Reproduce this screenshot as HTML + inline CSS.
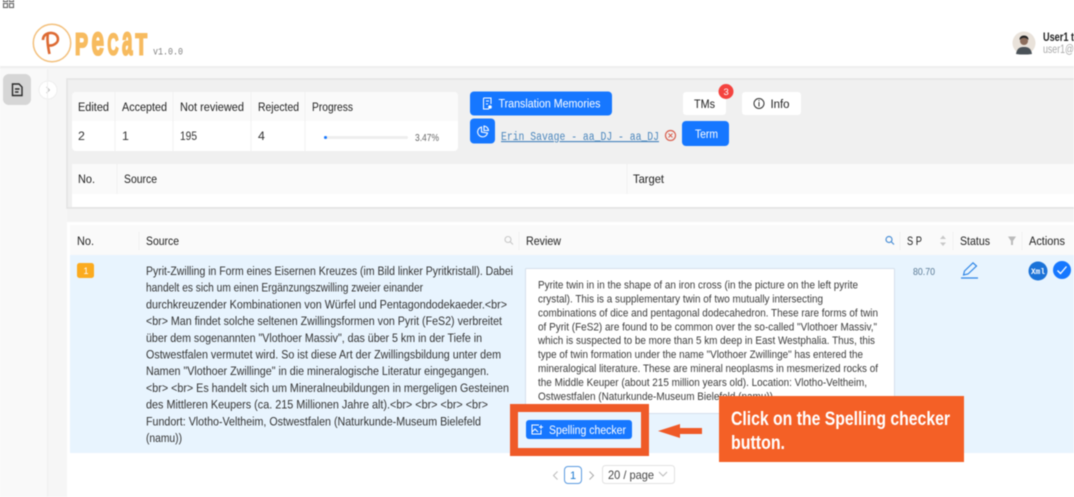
<!DOCTYPE html>
<html><head><meta charset="utf-8"><title>PeCat</title>
<style>
html,body{margin:0;padding:0;width:1074px;height:497px;overflow:hidden;background:#fff}
svg{display:block;filter:blur(.45px)}
text{font-family:"Liberation Sans",sans-serif;fill:#333;font-size:12px}
.s{font-size:12.4px;fill:#333}
.r{font-size:10.8px;fill:#3c3c3c}
.h{font-size:12.2px;fill:#222}
.l{fill:#f7bb5f;stroke:#f7bb5f;stroke-width:2.1px;font-weight:700}
</style></head><body>
<svg width="1074" height="497" viewBox="0 0 1074 497" xmlns="http://www.w3.org/2000/svg">
<rect width="1074" height="497" fill="#fff"/>
<!-- page regions -->
<rect y="67" width="1074" height="430" fill="#f6f6f6"/>
<rect y="69" width="47" height="428" fill="#f9f9f9"/>
<rect x="67" y="208" width="1007" height="289" fill="#fff"/>
<rect x="67" y="208" width="1007" height="14" fill="#f3f3f3"/>
<rect y="66" width="1074" height="2" fill="#efefef"/>
<!-- top left icon -->
<g fill="none" stroke="#666" stroke-width="1.100"><rect x="3.500" y="-2.500" width="4" height="4"/><rect x="9.500" y="-2.500" width="4" height="4"/><rect x="3.500" y="3.500" width="4" height="4"/><rect x="9.500" y="3.500" width="4" height="4"/></g>
<!-- logo -->
<circle cx="52" cy="43" r="18.700" fill="none" stroke="#f3c07c" stroke-width="1.500"/>
<path d="M49.500 54 C47.500 45 47 38 48 33 M43 40 C43 34.500 48 32.500 52 33 C58.500 34 60 41 55 44 C53 45.500 51 45.800 48.500 45.500" fill="none" stroke="#dd6a33" stroke-width="2.600"/>
<text class="l" x="75" y="54.500" textLength="13" lengthAdjust="spacingAndGlyphs" style="font-size:31px">P</text>
<text class="l" x="91.500" y="54.500" textLength="12.500" lengthAdjust="spacingAndGlyphs" style="font-size:41px">e</text>
<text class="l" x="107.500" y="54.500" textLength="11" lengthAdjust="spacingAndGlyphs" style="font-size:30px">C</text>
<text class="l" x="122" y="54.500" textLength="10.500" lengthAdjust="spacingAndGlyphs" style="font-size:41px">a</text>
<text class="l" x="135.500" y="54.500" textLength="11.500" lengthAdjust="spacingAndGlyphs" style="font-size:30px">T</text>
<text x="153" y="54.500" textLength="30" lengthAdjust="spacingAndGlyphs" style="font-family:'Liberation Mono',monospace;font-size:10px;fill:#808080">v1.0.0</text>
<!-- user -->
<circle cx="1024" cy="43" r="11.500" fill="#e9e2da"/>
<path d="M1016 54 C1017 48 1020 47 1024 47 C1028 47 1031 48 1032 54 L1028 54.500 L1020 54.500Z" fill="#4a5258"/>
<circle cx="1024" cy="41" r="4" fill="#8b6d5c"/>
<path d="M1019.500 40 C1019 34 1029 34 1028.500 40 C1026 37 1022 37 1019.500 40Z" fill="#222"/>
<text x="1043" y="41" textLength="31" lengthAdjust="spacingAndGlyphs" style="font-size:11.500px;font-weight:700;fill:#222">User1 t</text>
<text x="1043" y="53" textLength="31" lengthAdjust="spacingAndGlyphs" style="font-size:11.500px;fill:#aaa">user1@</text>
<!-- sidebar -->
<rect x="3" y="74" width="28" height="31" rx="6" fill="#d6d6d6"/>
<path d="M12.500 84 L19 84 L22 87 L22 95.500 L12.500 95.500Z M15 89 L19.500 89 M15 92 L18.500 92" fill="none" stroke="#2a2a2a" stroke-width="1.400"/>
<circle cx="48" cy="90" r="9" fill="#fff" stroke="#eee"/>
<path d="M46.500 87 L49.500 90 L46.500 93" fill="none" stroke="#bbb"/>
<line x1="47.500" y1="69" x2="47.500" y2="497" stroke="#f0f0f0"/>
<!-- top panel -->
<rect x="67" y="79" width="1008" height="129" fill="#f0f0f0" stroke="#e3e3e3" stroke-width="1.500"/>
<!-- stats table -->
<rect x="72" y="92" width="386" height="59" rx="4" fill="#fff"/>
<path d="M72 121V96a4 4 0 0 1 4-4H454a4 4 0 0 1 4 4V121Z" fill="#fafafa"/>
<g stroke="#f2f2f2"><line x1="115" y1="92" x2="115" y2="151"/><line x1="173" y1="92" x2="173" y2="151"/><line x1="251" y1="92" x2="251" y2="151"/><line x1="305" y1="92" x2="305" y2="151"/></g>
<text class="h" x="78" y="111" textLength="31" lengthAdjust="spacingAndGlyphs">Edited</text>
<text class="h" x="122" y="111" textLength="45" lengthAdjust="spacingAndGlyphs">Accepted</text>
<text class="h" x="180" y="111" textLength="64" lengthAdjust="spacingAndGlyphs">Not reviewed</text>
<text class="h" x="258" y="111" textLength="41" lengthAdjust="spacingAndGlyphs">Rejected</text>
<text class="h" x="312" y="111" textLength="41" lengthAdjust="spacingAndGlyphs">Progress</text>
<text class="s" x="78" y="140">2</text><text class="s" x="122" y="140">1</text><text class="s" x="180" y="140" textLength="17" lengthAdjust="spacingAndGlyphs">195</text><text class="s" x="258" y="140">4</text>
<rect x="324" y="136" width="84" height="3" rx="1.500" fill="#eee"/>
<rect x="324" y="136" width="3" height="3" rx="1.500" fill="#1677ff"/>
<text x="415" y="141" textLength="24" lengthAdjust="spacingAndGlyphs" style="font-size:10.500px;fill:#666">3.47%</text>
<!-- second table -->
<rect x="72" y="164" width="1002" height="43" fill="#fff"/>
<rect x="72" y="164" width="1002" height="30" fill="#fafafa"/>
<g stroke="#f0f0f0"><line x1="117" y1="164" x2="117" y2="194"/><line x1="627" y1="164" x2="627" y2="194"/></g>
<text class="h" x="78" y="183" textLength="17" lengthAdjust="spacingAndGlyphs">No.</text>
<text class="h" x="124" y="183" textLength="33" lengthAdjust="spacingAndGlyphs">Source</text>
<text class="h" x="633" y="183" textLength="31" lengthAdjust="spacingAndGlyphs">Target</text>
<!-- buttons -->
<rect x="470" y="91.500" width="142" height="24" rx="4" fill="#1677ff"/>
<path d="M483.500 98 H491 V104 M483.500 98 V109 H489 M486 101 H489 M486 104 H488" fill="none" stroke="#fff" stroke-width="1"/>
<circle cx="490" cy="107" r="1.800" fill="#fff"/>
<text x="498.500" y="107.500" textLength="102" lengthAdjust="spacingAndGlyphs" style="fill:#fff;font-size:12.400px">Translation Memories</text>
<rect x="470" y="118.500" width="25" height="25" rx="4" fill="#1677ff"/>
<path d="M481.500 127 A5 5 0 1 0 487.500 133 L481.500 132 Z M484 126 A5 5 0 0 1 488.500 130.500 L484 130.500 Z" fill="none" stroke="#fff" stroke-width="1.100"/>
<text x="501" y="140" textLength="158" lengthAdjust="spacingAndGlyphs" text-decoration="underline" style="font-family:'Liberation Mono',monospace;font-size:11.500px;fill:#4a86bd">Erin Savage - aa_DJ - aa_DJ</text>
<circle cx="670.500" cy="135.500" r="5" fill="none" stroke="#d9604f" stroke-width="1.200"/>
<path d="M668.500 133.500 L672.500 137.500 M672.500 133.500 L668.500 137.500" stroke="#d9604f" stroke-width="1"/>
<rect x="682" y="121" width="47" height="25" rx="4" fill="#1677ff"/>
<text x="695" y="138" textLength="23" lengthAdjust="spacingAndGlyphs" style="fill:#fff;font-size:12.400px">Term</text>
<rect x="683" y="92" width="43" height="23" rx="3" fill="#fff"/>
<text class="h" x="694" y="108" textLength="21" lengthAdjust="spacingAndGlyphs">TMs</text>
<circle cx="726" cy="91.500" r="7.500" fill="#f4433f"/>
<text x="723.500" y="95" style="font-size:9.500px;fill:#fff">3</text>
<rect x="742" y="92" width="59" height="23" rx="3" fill="#fff"/>
<circle cx="759" cy="103.500" r="5" fill="none" stroke="#333" stroke-width="1"/>
<path d="M759 102 V106.500 M759 100 V101" stroke="#333"/>
<text class="h" x="770.500" y="108" textLength="19" lengthAdjust="spacingAndGlyphs">Info</text>
<!-- main table head -->
<rect x="70" y="225" width="1004" height="30" fill="#fafafa"/>
<g stroke="#f0f0f0"><line x1="139" y1="232" x2="139" y2="250"/><line x1="519" y1="232" x2="519" y2="250"/><line x1="900" y1="232" x2="900" y2="250"/><line x1="953" y1="232" x2="953" y2="250"/><line x1="1022" y1="232" x2="1022" y2="250"/></g>
<text class="h" x="77" y="245" textLength="17" lengthAdjust="spacingAndGlyphs">No.</text>
<text class="h" x="146" y="245" textLength="33" lengthAdjust="spacingAndGlyphs">Source</text>
<circle cx="508" cy="239.500" r="3" fill="none" stroke="#c8c8c8" stroke-width="1.100"/><line x1="510" y1="241.500" x2="513" y2="244.500" stroke="#c8c8c8" stroke-width="1.100"/>
<text class="h" x="526" y="245" textLength="35" lengthAdjust="spacingAndGlyphs">Review</text>
<circle cx="889" cy="239.500" r="3" fill="none" stroke="#4b8fd6" stroke-width="1.200"/><line x1="891" y1="241.500" x2="894" y2="244.500" stroke="#4b8fd6" stroke-width="1.200"/>
<text class="h" x="907" y="245" textLength="15" lengthAdjust="spacingAndGlyphs">S P</text>
<path d="M943 235.500 L946 239 H940Z M943 246 L946 242.500 H940Z" fill="#c8c8c8"/>
<text class="h" x="960" y="245" textLength="30" lengthAdjust="spacingAndGlyphs">Status</text>
<path d="M1008 236.500 H1016 L1013 241 V245 H1011 V241Z" fill="#bbb"/>
<text class="h" x="1029" y="245" textLength="36" lengthAdjust="spacingAndGlyphs">Actions</text>
<!-- row -->
<rect x="70" y="255" width="1004" height="198" fill="#e8f4fe"/>
<rect x="77" y="263" width="17" height="15" rx="2.500" fill="#fbab1f"/>
<text x="83.500" y="274" style="font-size:9px;fill:#fff">1</text>
<text class="s" x="146" y="275" textLength="367" lengthAdjust="spacingAndGlyphs">Pyrit-Zwilling in Form eines Eisernen Kreuzes (im Bild linker Pyritkristall). Dabei</text>
<text class="s" x="146" y="291.700" textLength="277" lengthAdjust="spacingAndGlyphs">handelt es sich um einen Ergänzungszwilling zweier einander</text>
<text class="s" x="146" y="308.400" textLength="361" lengthAdjust="spacingAndGlyphs">durchkreuzender Kombinationen von Würfel und Pentagondodekaeder.&lt;br&gt;</text>
<text class="s" x="146" y="325.100" textLength="356" lengthAdjust="spacingAndGlyphs">&lt;br&gt; Man findet solche seltenen Zwillingsformen von Pyrit (FeS2) verbreitet</text>
<text class="s" x="146" y="341.800" textLength="336" lengthAdjust="spacingAndGlyphs">über dem sogenannten "Vlothoer Massiv", das über 5 km in der Tiefe in</text>
<text class="s" x="146" y="358.500" textLength="355" lengthAdjust="spacingAndGlyphs">Ostwestfalen vermutet wird. So ist diese Art der Zwillingsbildung unter dem</text>
<text class="s" x="146" y="375.200" textLength="343" lengthAdjust="spacingAndGlyphs">Namen "Vlothoer Zwillinge" in die mineralogische Literatur eingegangen.</text>
<text class="s" x="146" y="391.900" textLength="363" lengthAdjust="spacingAndGlyphs">&lt;br&gt; &lt;br&gt; Es handelt sich um Mineralneubildungen in mergeligen Gesteinen</text>
<text class="s" x="146" y="408.600" textLength="342" lengthAdjust="spacingAndGlyphs">des Mittleren Keupers (ca. 215 Millionen Jahre alt).&lt;br&gt; &lt;br&gt; &lt;br&gt; &lt;br&gt;</text>
<text class="s" x="146" y="425.300" textLength="335" lengthAdjust="spacingAndGlyphs">Fundort: Vlotho-Veltheim, Ostwestfalen (Naturkunde-Museum Bielefeld</text>
<text class="s" x="146" y="442" textLength="36" lengthAdjust="spacingAndGlyphs">(namu))</text>
<!-- review box -->
<rect x="525.500" y="268.500" width="369" height="145" rx="1" fill="#fff" stroke="#d5e0ec"/>
<text class="r" x="538" y="288.500" textLength="320" lengthAdjust="spacingAndGlyphs">Pyrite twin in in the shape of an iron cross (in the picture on the left pyrite</text>
<text class="r" x="538" y="302.500" textLength="285" lengthAdjust="spacingAndGlyphs">crystal). This is a supplementary twin of two mutually intersecting</text>
<text class="r" x="538" y="316.400" textLength="340" lengthAdjust="spacingAndGlyphs">combinations of dice and pentagonal dodecahedron. These rare forms of twin</text>
<text class="r" x="538" y="330.300" textLength="339" lengthAdjust="spacingAndGlyphs">of Pyrit (FeS2) are found to be common over the so-called "Vlothoer Massiv,"</text>
<text class="r" x="538" y="344.200" textLength="337" lengthAdjust="spacingAndGlyphs">which is suspected to be more than 5 km deep in East Westphalia. Thus, this</text>
<text class="r" x="538" y="358.100" textLength="325" lengthAdjust="spacingAndGlyphs">type of twin formation under the name "Vlothoer Zwillinge" has entered the</text>
<text class="r" x="538" y="372" textLength="340" lengthAdjust="spacingAndGlyphs">mineralogical literature. These are mineral neoplasms in mesmerized rocks of</text>
<text class="r" x="538" y="385.900" textLength="329" lengthAdjust="spacingAndGlyphs">the Middle Keuper (about 215 million years old). Location: Vlotho-Veltheim,</text>
<text class="r" x="538" y="399.800" textLength="235" lengthAdjust="spacingAndGlyphs">Ostwestfalen (Naturkunde-Museum Bielefeld (namu))</text>
<!-- sp/status/actions -->
<text x="913" y="275" textLength="22" lengthAdjust="spacingAndGlyphs" style="font-size:10.500px;fill:#5a7a96">80.70</text>
<path d="M963.500 275 L964.500 271 L973 262.800 L976.500 266 L968 274 Z" fill="none" stroke="#2f86e6" stroke-width="1.200"/>
<line x1="961" y1="278" x2="978" y2="278" stroke="#2f86e6" stroke-width="1.300"/>
<circle cx="1038" cy="271" r="9.500" fill="#1a72d8"/>
<text x="1031" y="274" textLength="14" lengthAdjust="spacingAndGlyphs" style="font-family:'Liberation Mono',monospace;font-weight:700;font-size:8px;fill:#fff">Xml</text>
<circle cx="1062" cy="270" r="9" fill="#1677ff"/>
<path d="M1057.500 270.500 L1060.500 273.500 L1066.500 266.500" fill="none" stroke="#fff" stroke-width="1.300"/>
<!-- annotation box -->
<rect x="514" y="408" width="131" height="44" fill="#e8f4fe" stroke="#ef5a28" stroke-width="8"/>
<rect x="526" y="420" width="106" height="19" rx="3" fill="#1677ff"/>
<path d="M539 425 H532 V434 H541 V430 M532 432 L535 429 L538 432" fill="none" stroke="#fff" stroke-width="1"/>
<path d="M541 425 V429 M539 427 H543" stroke="#fff" stroke-width="1"/>
<text x="549" y="434" textLength="77" lengthAdjust="spacingAndGlyphs" style="fill:#fff;font-size:12.400px">Spelling checker</text>
<path d="M658 431 L680 424 V428 H702 V434 H680 V438 Z" fill="#ef5a28"/>
<!-- callout -->
<rect x="719" y="396" width="245" height="66" fill="#f46026"/>
<text x="731" y="425" textLength="219" lengthAdjust="spacingAndGlyphs" style="font-size:19.500px;font-weight:700;fill:#fff">Click on the Spelling checker</text>
<text x="731" y="449" textLength="54" lengthAdjust="spacingAndGlyphs" style="font-size:19.500px;font-weight:700;fill:#fff">button.</text>
<!-- pagination -->
<path d="M557.500 471.500 L553.500 475.500 L557.500 479.500" fill="none" stroke="#bbb"/>
<rect x="564.500" y="466.500" width="17" height="17" rx="3.500" fill="#fff" stroke="#5a9ae0"/>
<text x="570" y="479" style="font-size:11px;fill:#1677d0">1</text>
<path d="M589.500 471.500 L593.500 475.500 L589.500 479.500" fill="none" stroke="#aaa"/>
<rect x="602.500" y="465.500" width="72" height="18" rx="3" fill="#fff" stroke="#e2e2e2"/>
<text x="608" y="479" textLength="46" lengthAdjust="spacingAndGlyphs" style="font-size:12px;fill:#444">20 / page</text>
<path d="M659 472 L663 476 L667 472" fill="none" stroke="#bbb"/>
</svg>
</body></html>
